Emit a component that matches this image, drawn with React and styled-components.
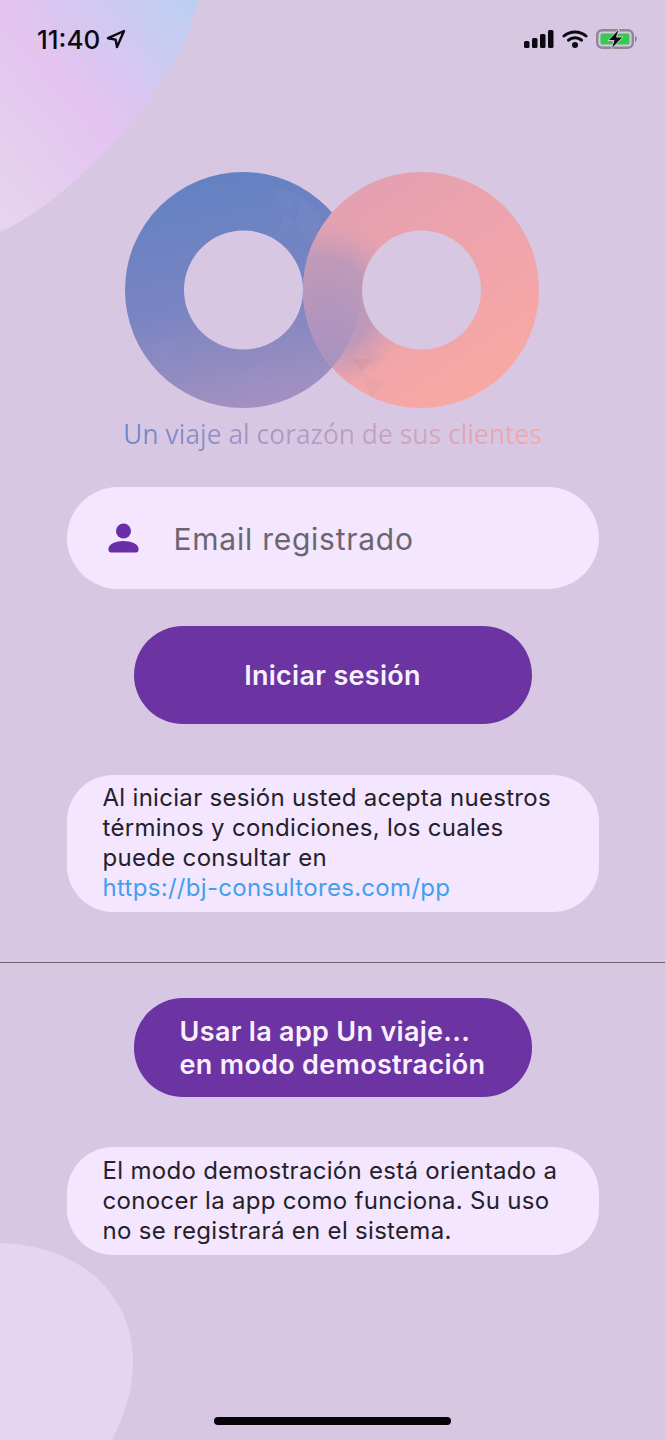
import styled, { createGlobalStyle } from "styled-components";

const GlobalStyle = createGlobalStyle`
  html, body {
    margin: 0;
    padding: 0;
    background: #d7c7e2;
  }
  * {
    box-sizing: border-box;
  }
`;

const Screen = styled.div`
  position: relative;
  width: 665px;
  height: 1440px;
  overflow: hidden;
  background: #d7c7e2;
  font-family: Inter, "Liberation Sans", sans-serif;
  display: flex;
  flex-direction: column;
  align-items: center;
`;

const TopBlob = styled.svg`
  position: absolute;
  top: 0;
  left: 0;
`;

const BottomBlob = styled.svg`
  position: absolute;
  left: 0;
  bottom: 0;
`;

const StatusBar = styled.div`
  position: relative;
  width: 100%;
  height: 80px;
  padding: 24px 27px 0 37px;
  display: flex;
  justify-content: space-between;
  align-items: flex-start;
`;

const Time = styled.div`
  display: flex;
  align-items: center;
  gap: 6px;
  height: 30px;
  font-size: 26px;
  font-weight: 500;
  color: #0c0a10;
`;

const StatusIcons = styled.div`
  display: flex;
  align-items: center;
  gap: 8px;
  height: 30px;
`;

const Logo = styled.svg`
  position: relative;
  display: block;
  margin-top: 91px;
`;

const Tagline = styled.div`
  position: relative;
  margin-top: 7px;
  font-family: "Open Sans", "Noto Sans", sans-serif;
  font-size: 26.4px;
  line-height: 36px;
  background: linear-gradient(90deg, #7287c6 0%, #a79ac6 35%, #c9a2c0 65%, #f7a9a6 100%);
  -webkit-background-clip: text;
  background-clip: text;
  color: transparent;
`;

const InputPill = styled.div`
  position: relative;
  width: 532px;
  height: 102px;
  margin-top: 35px;
  padding-left: 41px;
  border-radius: 51px;
  background: #f3e6fe;
  display: flex;
  align-items: center;
  gap: 35px;
`;

const Placeholder = styled.span`
  padding-top: 2px;
  font-size: 30px;
  letter-spacing: 0.75px;
  color: #6b6570;
`;

const PrimaryButton = styled.button`
  position: relative;
  width: 398px;
  height: ${(props) => props.$height}px;
  margin-top: ${(props) => props.$top}px;
  border: 0;
  border-radius: 49px;
  background: #6c33a3;
  color: #f8f1fd;
  font-family: inherit;
  font-size: 27px;
  font-weight: 600;
  letter-spacing: 0.3px;
  line-height: 33px;
  display: flex;
  align-items: center;
  justify-content: center;
  text-align: left;
`;

const NoteCard = styled.div`
  position: relative;
  width: 532px;
  margin-top: ${(props) => props.$top}px;
  padding: ${(props) => props.$padTop}px 36px 9px;
  border-radius: 46px;
  background: #f3e6fe;
  color: #24212a;
  font-size: 24px;
  letter-spacing: 0.3px;
  line-height: 30px;
`;

const NoteLink = styled.a`
  color: #42a0ef;
  text-decoration: none;
`;

const Divider = styled.div`
  position: relative;
  width: 100%;
  height: 1px;
  margin-top: 50px;
  background: #6b6370;
`;

const HomeBar = styled.div`
  position: absolute;
  left: 214px;
  bottom: 15px;
  width: 237px;
  height: 8px;
  border-radius: 4px;
  background: #060408;
`;

function NavArrow() {
  return (
    <svg width="20" height="20" viewBox="0 0 20 20">
      <path
        d="M18 2 L2 9.2 L9.6 10.6 L11 18 Z"
        fill="none"
        stroke="#0c0a10"
        strokeWidth="2.4"
        strokeLinejoin="round"
      />
    </svg>
  );
}

function SignalIcon() {
  return (
    <svg width="30" height="20" viewBox="0 0 30 20">
      <rect x="0" y="12" width="5.5" height="7" rx="1.5" fill="#0c0a10" />
      <rect x="8" y="9" width="5.5" height="10" rx="1.5" fill="#0c0a10" />
      <rect x="16" y="5" width="5.5" height="14" rx="1.5" fill="#0c0a10" />
      <rect x="24" y="1" width="5.5" height="18" rx="1.5" fill="#0c0a10" />
    </svg>
  );
}

function WifiIcon() {
  return (
    <svg width="26" height="20" viewBox="0 0 26 20">
      <path d="M2 7 C8 1.5 18 1.5 24 7" fill="none" stroke="#0c0a10" strokeWidth="3" strokeLinecap="round" />
      <path d="M6.5 11.2 C10 8 16 8 19.5 11.2" fill="none" stroke="#0c0a10" strokeWidth="3" strokeLinecap="round" />
      <circle cx="13" cy="16" r="3" fill="#0c0a10" />
    </svg>
  );
}

function BatteryIcon() {
  return (
    <svg width="42" height="22" viewBox="0 0 42 22">
      <rect x="1.2" y="2.2" width="35.6" height="17.6" rx="5" fill="none" stroke="#8d8992" strokeWidth="2.4" />
      <rect x="4.5" y="5.5" width="29" height="11" rx="1.5" fill="#37c94f" />
      <path d="M39 8 C41.5 8.5 41.5 13.5 39 14 Z" fill="#8d8992" />
      <path d="M23.5 0.5 L12 12.5 H18 L15 21.5 L27 9 H20.5 Z" fill="#0c0a10" stroke="#d7c7e2" strokeWidth="1" />
    </svg>
  );
}

function PersonIcon() {
  return (
    <svg width="31" height="30" viewBox="0 0 31 30">
      <circle cx="15.5" cy="8" r="7.5" fill="#6c2ea6" />
      <path
        d="M15.5 18 C8 18 0.5 21 0.5 25.5 V27 C0.5 28.5 1.5 29.5 3 29.5 H28 C29.5 29.5 30.5 28.5 30.5 27 V25.5 C30.5 21 23 18 15.5 18 Z"
        fill="#6c2ea6"
      />
    </svg>
  );
}

// the soft triangles in the logo, they barely show
const leftFacets = [
  "M275 186 L300 196 L284 214 Z",
  "M300 196 L322 214 L296 226 Z",
  "M284 214 L296 226 L276 238 Z",
  "M296 226 L322 214 L314 250 Z",
  "M150 345 L176 338 L170 372 Z",
  "M232 380 L262 362 L272 398 Z",
];

const rightFacets = [
  "M340 372 L356 352 L364 376 Z",
  "M364 344 L384 358 L366 366 Z",
  "M362 378 L386 380 L372 398 Z",
];

const leftRing = "M125 290 a118 118 0 1 0 236 0 a118 118 0 1 0 -236 0 Z m59 0 a59.5 59.5 0 1 1 119 0 a59.5 59.5 0 1 1 -119 0 Z";
const rightRing = "M303 290 a118 118 0 1 0 236 0 a118 118 0 1 0 -236 0 Z m59 0 a59.5 59.5 0 1 1 119 0 a59.5 59.5 0 1 1 -119 0 Z";

function InfinityLogo() {
  return (
    <Logo width="416" height="238" viewBox="125 171 416 238">
      <defs>
        <linearGradient id="blueRing" gradientUnits="userSpaceOnUse" x1="250" y1="172" x2="300" y2="408">
          <stop offset="0" stopColor="#6482c2" />
          <stop offset="0.5" stopColor="#7a84c2" />
          <stop offset="1" stopColor="#a792c0" />
        </linearGradient>
        <linearGradient id="pinkRing" gradientUnits="userSpaceOnUse" x1="340" y1="190" x2="480" y2="400">
          <stop offset="0" stopColor="#e2a0b3" />
          <stop offset="0.4" stopColor="#eca3ac" />
          <stop offset="1" stopColor="#f9a8a3" />
        </linearGradient>
        <radialGradient id="mauveGlow" gradientUnits="userSpaceOnUse" cx="325" cy="305" r="85">
          <stop offset="0" stopColor="#b596bc" />
          <stop offset="0.55" stopColor="#bf99b9" />
          <stop offset="1" stopColor="#d09db6" stopOpacity="0" />
        </radialGradient>
        <linearGradient id="lowerCrossing" gradientUnits="userSpaceOnUse" x1="332" y1="285" x2="332" y2="345">
          <stop offset="0" stopColor="#b094be" stopOpacity="0" />
          <stop offset="1" stopColor="#ab93bf" />
        </linearGradient>
        <clipPath id="leftClip">
          <path d={leftRing} />
        </clipPath>
        <clipPath id="rightClip">
          <path d={rightRing} />
        </clipPath>
      </defs>
      <path d={leftRing} fill="url(#blueRing)" />
      <g clipPath="url(#leftClip)">
        {leftFacets.map((d) => (
          <path key={d} d={d} fill="#a99cd0" opacity="0.09" />
        ))}
      </g>
      <path d={rightRing} fill="url(#pinkRing)" />
      <g clipPath="url(#rightClip)">
        <circle cx="325" cy="305" r="85" fill="url(#mauveGlow)" />
        {rightFacets.map((d) => (
          <path key={d} d={d} fill="#c99ab4" opacity="0.14" />
        ))}
        <path d="M352 359 L372 359 L362 371 Z" fill="#d4919f" opacity="0.5" />
        <g clipPath="url(#leftClip)">
          <rect x="295" y="285" width="70" height="90" fill="url(#lowerCrossing)" />
        </g>
      </g>
    </Logo>
  );
}

function App() {
  return (
    <Screen>
      <GlobalStyle />
      <TopBlob width="200" height="236" viewBox="0 0 200 236">
        <defs>
          <linearGradient id="topBlob" x1="0.95" y1="0" x2="0" y2="0.95">
            <stop offset="0" stopColor="#bccff1" />
            <stop offset="0.5" stopColor="#e4c3f0" />
            <stop offset="1" stopColor="#e6d4ee" />
          </linearGradient>
        </defs>
        <path d="M0 0 H198 C186 55 160 85 123 133 C90 170 40 215 0 232 Z" fill="url(#topBlob)" />
      </TopBlob>
      <BottomBlob width="134" height="197" viewBox="0 0 134 197">
        <path d="M0 0 C78 2 133 50 133 118 C133 150 123 175 112 197 H0 Z" fill="#e4d6f0" />
      </BottomBlob>

      <StatusBar>
        <Time>
          11:40
          <NavArrow />
        </Time>
        <StatusIcons>
          <SignalIcon />
          <WifiIcon />
          <BatteryIcon />
        </StatusIcons>
      </StatusBar>

      <InfinityLogo />
      <Tagline>Un viaje al corazón de sus clientes</Tagline>

      <InputPill>
        <PersonIcon />
        <Placeholder>Email registrado</Placeholder>
      </InputPill>

      <PrimaryButton $top={37} $height={98}>
        Iniciar sesión
      </PrimaryButton>

      <NoteCard $top={51} $padTop={8}>
        Al iniciar sesión usted acepta nuestros
        <br />
        términos y condiciones, los cuales
        <br />
        puede consultar en
        <br />
        <NoteLink href="#">https://bj-consultores.com/pp</NoteLink>
      </NoteCard>

      <Divider />

      <PrimaryButton $top={35} $height={99}>
        <span>
          Usar la app Un viaje...
          <br />
          en modo demostración
        </span>
      </PrimaryButton>

      <NoteCard $top={50} $padTop={9}>
        El modo demostración está orientado a
        <br />
        conocer la app como funciona. Su uso
        <br />
        no se registrará en el sistema.
      </NoteCard>

      <HomeBar />
    </Screen>
  );
}

export default App;
